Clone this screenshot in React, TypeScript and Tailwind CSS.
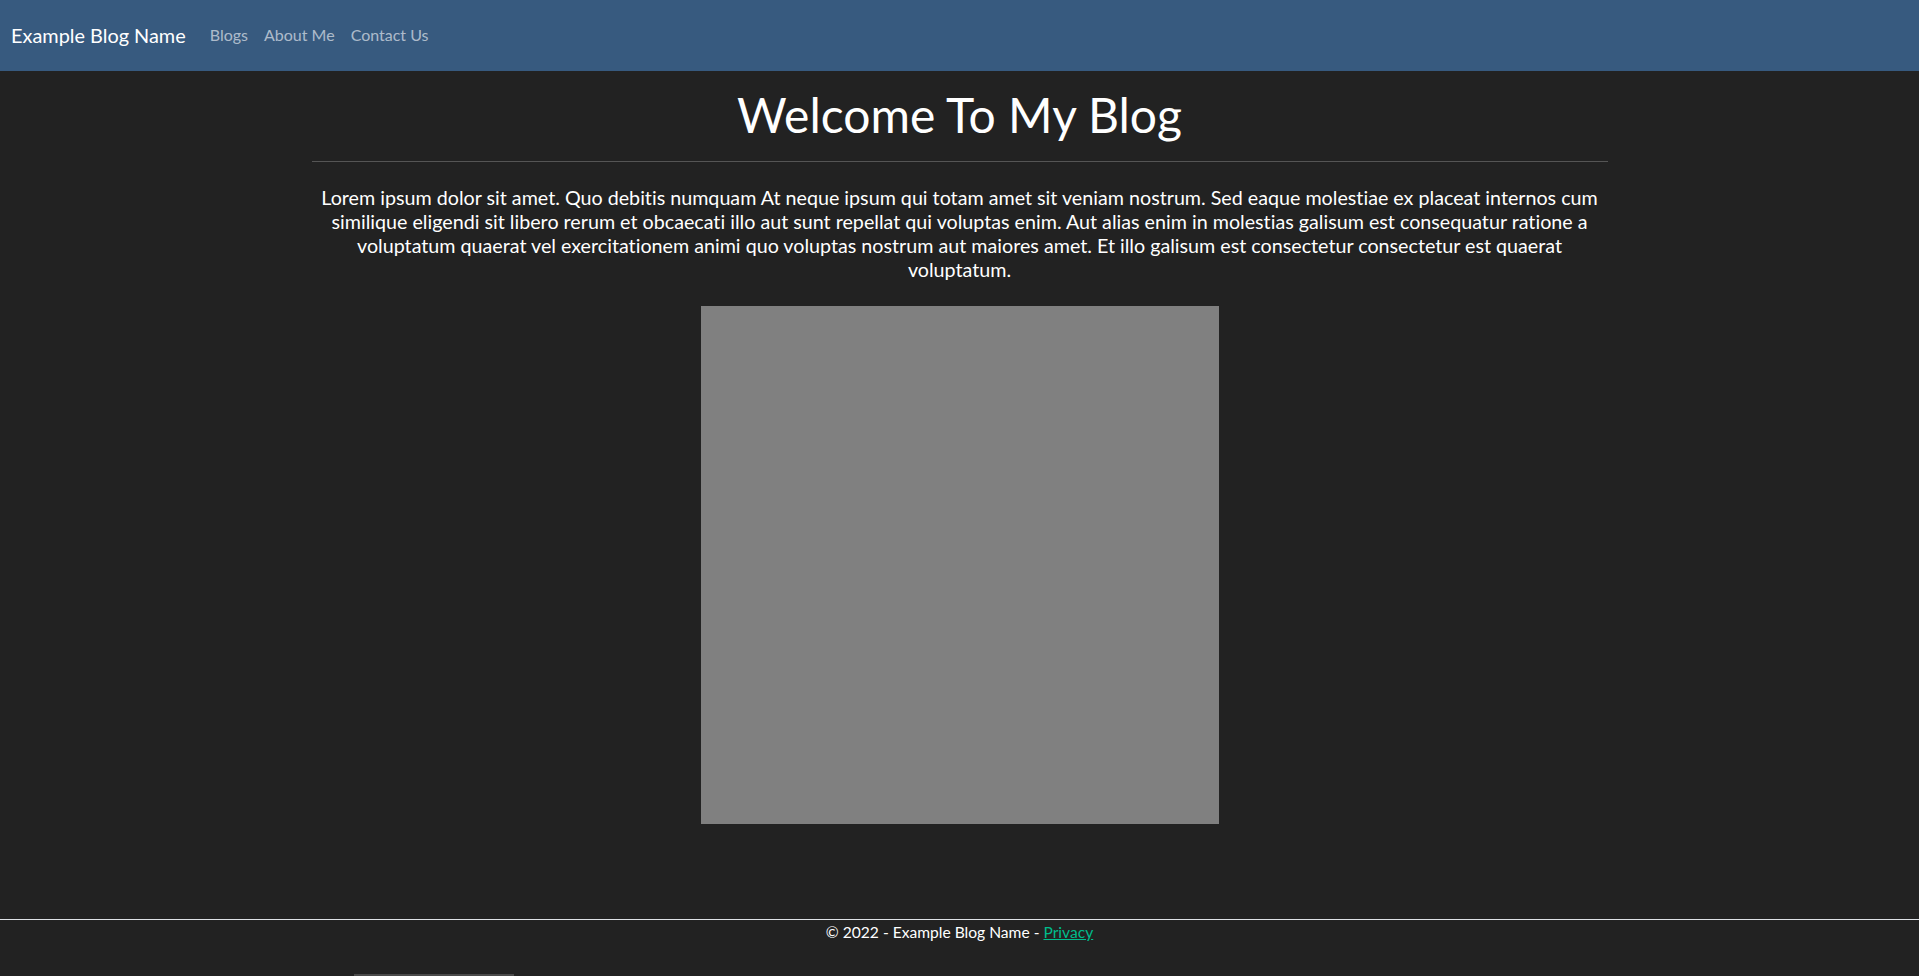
export default function App() {
  return (
    <div className="h-[976px] overflow-hidden flex flex-col bg-[#222222] text-white [font-variant-ligatures:none]" style={{ fontFamily: 'Lato, "Noto Sans", sans-serif' }}>
      <nav className="h-[71px] bg-[#375a7f] flex items-center pl-[11px] pb-[1px] shrink-0">
        <span className="text-[19.9px] leading-[30px] text-white mr-[24px]">Example Blog Name</span>
        <div className="flex items-center gap-[16px] text-[16px] text-[rgba(255,255,255,0.6)]">
          <span>Blogs</span>
          <span>About Me</span>
          <span>Contact Us</span>
        </div>
      </nav>
      <main className="w-[1296px] mx-auto flex flex-col items-center">
        <h1 className="mt-[14px] text-[48px] leading-[60px] text-center">Welcome To My Blog</h1>
        <hr className="w-full mt-[16px] border-0 border-t border-[#555555]" />
        <p className="mt-[24px] text-[19.7px] leading-[24px] text-center">
          Lorem ipsum dolor sit amet. Quo debitis numquam At neque ipsum qui totam amet sit veniam nostrum. Sed eaque molestiae ex placeat internos cum similique eligendi sit libero rerum et obcaecati illo aut sunt repellat qui voluptas enim. Aut alias enim in molestias galisum est consequatur ratione a voluptatum quaerat vel exercitationem animi quo voluptas nostrum aut maiores amet. Et illo galisum est consectetur consectetur est quaerat voluptatum.
        </p>
        <div className="mt-[24px] w-[518px] h-[518px] bg-[#808080]" />
      </main>
      <footer className="mt-auto border-t border-[#dee2e6] flex flex-col h-[57px] shrink-0">
        <div className="text-center text-[15.6px] leading-[24px]">
          © 2022 - Example Blog Name - <span className="text-[#00bc8c] underline">Privacy</span>
        </div>
        <div className="mt-auto ml-[354px] w-[160px] h-[2px] bg-[#4a4a4a]" />
      </footer>
    </div>
  );
}
